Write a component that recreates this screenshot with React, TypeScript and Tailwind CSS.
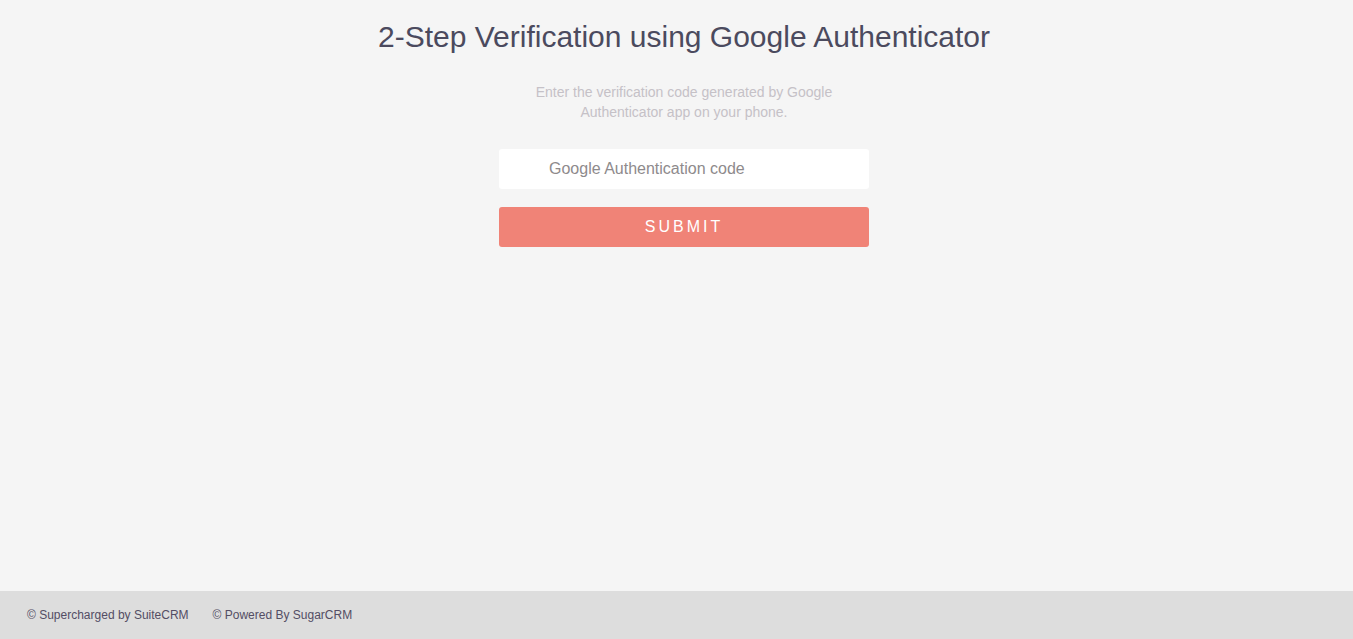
export default function App() {
  return (
    <div
      className="min-h-screen flex flex-col bg-[#f5f5f5]"
      style={{ fontFamily: '"Liberation Sans", Arial, sans-serif' }}
    >
      <main className="flex-1 flex flex-col items-center pl-[15px]">
        <h1 className="mt-[17px] text-[30px] leading-[40px] text-[#4b4a5e]">
          2-Step Verification using Google Authenticator
        </h1>
        <p className="mt-[25px] w-[310px] text-center text-[14px] leading-[20px] text-[#c5c1c7]">
          Enter the verification code generated by Google Authenticator app on your phone.
        </p>
        <form className="mt-[27px] w-[370px] flex flex-col gap-[18px]" onSubmit={(e) => e.preventDefault()}>
          <input
            type="text"
            placeholder="Google Authentication code"
            className="h-[40px] w-full rounded-[3px] bg-white pl-[50px] text-[16px] text-[#555] placeholder:text-[#8e8a8c] outline-none"
          />
          <button
            type="submit"
            className="h-[40px] w-full rounded-[3px] bg-[#f08377] text-[16px] tracking-[3px] text-white"
          >
            SUBMIT
          </button>
        </form>
      </main>
      <footer className="h-[48px] bg-[#dddddd] flex items-center gap-[24px] pl-[27px] text-[12px] text-[#534d64]">
        <span>© Supercharged by SuiteCRM</span>
        <span>© Powered By SugarCRM</span>
      </footer>
    </div>
  );
}
